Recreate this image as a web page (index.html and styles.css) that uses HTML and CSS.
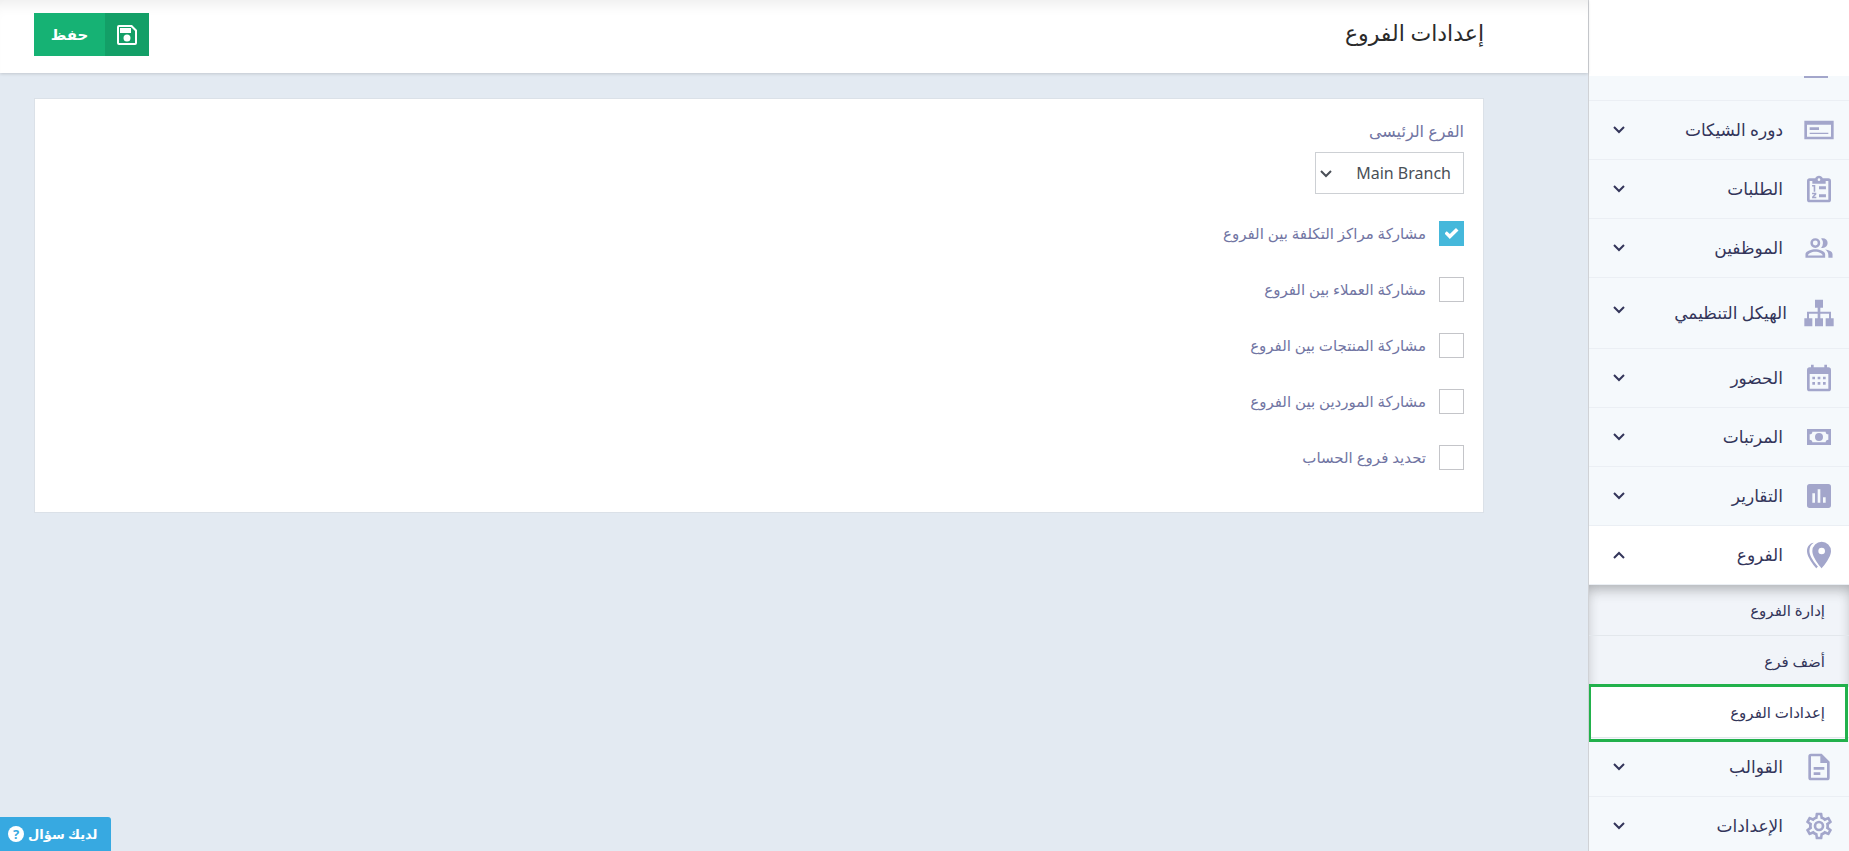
FILE: index.html
```html
<!DOCTYPE html>
<html lang="ar" dir="rtl">
<head>
    <meta charset="UTF-8">
    <meta name="viewport" content="width=device-width, initial-scale=1.0">
    <title>إعدادات الفروع</title>
    <link rel="stylesheet" href="styles.css">
</head>
<body>
    <!-- Sidebar -->
    <aside class="sidebar">
        <div class="brand"></div>
        <nav>
            <ul class="menu">
                <li class="menu-peek">
                    <svg viewBox="0 0 32 2"><path d="M1 0h24v2H1z"/></svg>
                </li>
                <li>
                    <button class="menu-item" type="button">
                        <svg class="icon" viewBox="0 0 24 24"><path fill-rule="evenodd" d="M1 5h22v14H1zM3 8v9h18V8zM5 10h7v2H5zM5 14h14v1H5z"/></svg>
                        <span>دوره الشيكات</span>
                        <svg class="chevron" viewBox="0 0 12 8"><path d="M1 1l5 5 5-5"/></svg>
                    </button>
                </li>
                <li>
                    <button class="menu-item" type="button">
                        <svg class="icon" viewBox="0 0 24 24"><path fill-rule="evenodd" d="M19 4h-4.180C14.400 2.840 13.300 2 12 2s-2.400.840-2.820 2H5a2 2 0 0 0-2 2v14a2 2 0 0 0 2 2h14a2 2 0 0 0 2-2V6a2 2 0 0 0-2-2zm-7 0a1 1 0 1 1 0 2 1 1 0 0 1 0-2zM5 6h2v2h10V6h2v14H5zM6.800 9h2.400v5H8v-3.800H6.800zM12 10h5.200v2.200H12zM12 16h5.200v2.200H12zM6.800 14.800H10v1.300l-1.700 1.800H10V19H6.800v-1.200l1.800-1.900H6.800z"/></svg>
                        <span>الطلبات</span>
                        <svg class="chevron" viewBox="0 0 12 8"><path d="M1 1l5 5 5-5"/></svg>
                    </button>
                </li>
                <li>
                    <button class="menu-item" type="button">
                        <svg class="icon" viewBox="-1 -1 26 26"><path d="M17 13.200c2 1.400 2.600 2.700 2.600 4.800v2H23v-3c0-2.200-3.200-3.500-6-3.800zM15 12a4 4 0 0 0 0-8c-.5 0-.9.100-1.300.200a5.500 5.500 0 0 1 0 7.600c.4.100.8.200 1.300.200zM9 12a4 4 0 1 0 0-8 4 4 0 0 0 0 8zm0-6a2 2 0 1 1 0 4 2 2 0 0 1 0-4zM9 13c-2.700 0-8 1.300-8 4v3h16v-3c0-2.700-5.300-4-8-4zm6 5H3c0-1.300 3-3 6-3s6 1.700 6 3z"/></svg>
                        <span>الموظفين</span>
                        <svg class="chevron" viewBox="0 0 12 8"><path d="M1 1l5 5 5-5"/></svg>
                    </button>
                </li>
                <li>
                    <button class="menu-item menu-item-tall" type="button">
                        <svg class="icon" viewBox="0 0 24 24"><path d="M9 2h6v6h-2v3h8v5h2v6h-6v-6h2.500v-3.500H13V16h2v6H9v-6h2v-3.500H4.500V16H7v6H1v-6h2v-5h8V8H9z"/></svg>
                        <span>الهيكل التنظيمي</span>
                        <svg class="chevron" viewBox="0 0 12 8"><path d="M1 1l5 5 5-5"/></svg>
                    </button>
                </li>
                <li>
                    <button class="menu-item" type="button">
                        <svg class="icon" viewBox="0 0 24 24"><path fill-rule="evenodd" d="M19 4h-1V2h-2v2H8V2H6v2H5a2 2 0 0 0-2 2v14a2 2 0 0 0 2 2h14a2 2 0 0 0 2-2V6a2 2 0 0 0-2-2zm0 16H5V9h14zM7 11h2v2H7zM11 11h2v2h-2zM15 11h2v2h-2zM7 15h2v2H7zM11 15h2v2h-2zM15 15h2v2h-2z"/></svg>
                        <span>الحضور</span>
                        <svg class="chevron" viewBox="0 0 12 8"><path d="M1 1l5 5 5-5"/></svg>
                    </button>
                </li>
                <li>
                    <button class="menu-item" type="button">
                        <svg class="icon" viewBox="0 0 24 24"><path fill-rule="evenodd" d="M3 6h18v12H3zM7 8a2 2 0 0 1-2 2v4a2 2 0 0 1 2 2h10a2 2 0 0 1 2-2v-4a2 2 0 0 1-2-2zm5 1a3 3 0 1 1 0 6 3 3 0 0 1 0-6z"/></svg>
                        <span>المرتبات</span>
                        <svg class="chevron" viewBox="0 0 12 8"><path d="M1 1l5 5 5-5"/></svg>
                    </button>
                </li>
                <li>
                    <button class="menu-item" type="button">
                        <svg class="icon" viewBox="0 0 24 24"><path fill-rule="evenodd" d="M5 3h14a2 2 0 0 1 2 2v14a2 2 0 0 1-2 2H5a2 2 0 0 1-2-2V5a2 2 0 0 1 2-2zM7 10v7h2v-7zM11 7v10h2V7zM15 13v4h2v-4z"/></svg>
                        <span>التقارير</span>
                        <svg class="chevron" viewBox="0 0 12 8"><path d="M1 1l5 5 5-5"/></svg>
                    </button>
                </li>
                <li>
                    <button class="menu-item menu-item-open" type="button">
                        <svg class="icon" viewBox="0 0 24 24"><path fill-rule="evenodd" d="M14 2a7 7 0 0 0-7 7c0 5.200 7 13 7 13s7-7.800 7-13a7 7 0 0 0-7-7zm0 4.500a2.500 2.500 0 1 1 0 5 2.500 2.500 0 0 1 0-5z"/><path d="M4.800 9c0-2.600 1.200-4.900 3.300-6.100C5 3.200 3 5.900 3 9c0 5.200 7 13 7 13l1.200-1.400C9 18.300 4.800 13 4.800 9z"/></svg>
                        <span>الفروع</span>
                        <svg class="chevron" viewBox="0 0 12 8"><path d="M1 7l5-5 5 5"/></svg>
                    </button>
                    <ul class="submenu">
                        <li><a href="#">إدارة الفروع</a></li>
                        <li><a href="#">أضف فرع</a></li>
                        <li><a href="#" class="current">إعدادات الفروع</a></li>
                    </ul>
                </li>
                <li>
                    <button class="menu-item" type="button">
                        <svg class="icon" viewBox="0 0 24 24"><path fill-rule="evenodd" d="M6 2h8l6 6v12a2 2 0 0 1-2 2H6a2 2 0 0 1-2-2V4a2 2 0 0 1 2-2zm0 2v16h12V9h-5V4zM8 12h8v2H8zM8 16h5v2H8z"/></svg>
                        <span>القوالب</span>
                        <svg class="chevron" viewBox="0 0 12 8"><path d="M1 1l5 5 5-5"/></svg>
                    </button>
                </li>
                <li>
                    <button class="menu-item" type="button">
                        <svg class="icon" viewBox="0 0 24 24"><path d="M12 8a4 4 0 1 1 0 8 4 4 0 0 1 0-8m0 2a2 2 0 1 0 0 4 2 2 0 0 0 0-4m-2 12c-.25 0-.46-.18-.5-.42l-.37-2.650c-.63-.25-1.170-.59-1.690-.99l-2.490 1.010c-.22.080-.49 0-.61-.22l-2-3.460a.49.49 0 0 1 .12-.64l2.110-1.660L4.500 12l.070-1-2.110-1.630a.49.49 0 0 1-.12-.64l2-3.460c.12-.22.390-.31.610-.22l2.490 1c.520-.39 1.060-.73 1.690-.98l.370-2.650c.040-.24.250-.42.500-.42h4c.250 0 .460.180.500.420l.370 2.650c.630.250 1.170.59 1.690.98l2.490-1c.220-.09.490 0 .610.220l2 3.460c.130.220.070.490-.12.640L19.430 11l.070 1-.07 1 2.110 1.630c.190.150.250.420.120.640l-2 3.460c-.12.220-.39.310-.61.220l-2.490-1c-.52.390-1.060.73-1.690.98l-.37 2.650c-.04.240-.25.420-.5.420zm1.250-18-.37 2.610c-1.200.25-2.260.89-3.030 1.780L5.440 7.350l-.75 1.300L6.800 10.200a6.100 6.100 0 0 0 0 3.600l-2.120 1.560.75 1.300 2.430-1.040c.77.880 1.820 1.520 3.010 1.760l.37 2.620h1.520l.37-2.610c1.190-.25 2.240-.89 3.010-1.770l2.430 1.040.75-1.300-2.120-1.550c.4-1.170.4-2.440 0-3.610l2.110-1.550-.75-1.300-2.410 1.040a5.400 5.400 0 0 0-3.030-1.770L12.750 4z"/></svg>
                        <span>الإعدادات</span>
                        <svg class="chevron" viewBox="0 0 12 8"><path d="M1 1l5 5 5-5"/></svg>
                    </button>
                </li>
            </ul>
        </nav>
    </aside>

    <!-- Page -->
    <form class="page">
        <header class="page-head">
            <h1>إعدادات الفروع</h1>
            <button class="save" type="submit">
                <span class="save-icon">
                    <svg viewBox="0 0 20 20"><path fill-rule="evenodd" d="M2 0h13l5 5v13a2 2 0 0 1-2 2H2a2 2 0 0 1-2-2V2a2 2 0 0 1 2-2zm0 2v16h16V6l-4-4zM3 3h11v5H3zM10 9.500a3.500 3.500 0 1 1 0 7 3.500 3.500 0 0 1 0-7z"/></svg>
                </span>
                <span class="save-text">حفظ</span>
            </button>
        </header>

        <main class="card">
            <label class="field-label" for="main-branch">الفرع الرئيسى</label>
            <div class="select-box">
                <select id="main-branch">
                    <option>Main Branch</option>
                </select>
                <svg viewBox="0 0 12 8"><path d="M1 1l5 5 5-5"/></svg>
            </div>

            <div class="checks">
                <label class="check"><input type="checkbox" checked><span>مشاركة مراكز التكلفة بين الفروع</span></label>
                <label class="check"><input type="checkbox"><span>مشاركة العملاء بين الفروع</span></label>
                <label class="check"><input type="checkbox"><span>مشاركة المنتجات بين الفروع</span></label>
                <label class="check"><input type="checkbox"><span>مشاركة الموردين بين الفروع</span></label>
                <label class="check"><input type="checkbox"><span>تحديد فروع الحساب</span></label>
            </div>
        </main>
    </form>

    <button class="help" type="button">
        <span>لديك سؤال</span>
        <span class="help-mark">?</span>
    </button>
</body>
</html>
```
FILE: styles.css
```css
* {
    box-sizing: border-box;
}
body {
    display: flex;
    height: 100vh;
    margin: 0;
    overflow: hidden;
    background-color: #e3eaf2;
    font-family: "Noto Sans", "DejaVu Sans", sans-serif;
    color: #33355a;
}
button, select {
    font-family: inherit;
    color: inherit;
    cursor: pointer;
}
ul {
    list-style: none;
    margin: 0;
    padding: 0;
}

/* Sidebar */
.sidebar {
    flex: 0 0 261px;
    display: flex;
    flex-direction: column;
    background-color: #f5f9fc;
    border-left: 1px solid #d0d2d6;
    overflow: hidden;
}
.brand {
    flex: 0 0 76px;
    background-color: #fff;
}
.menu-peek {
    height: 25px;
    padding-right: 14px;
    border-bottom: 1px solid #ebeff4;
}
.menu-peek svg {
    display: block;
    width: 32px;
    height: 2px;
    fill: #a3a6cb;
}
.menu-item {
    display: flex;
    align-items: center;
    width: 100%;
    height: 59px;
    padding: 0 14px 0 24px;
    border: none;
    border-bottom: 1px solid #ebeff4;
    background: none;
    font-size: 17px;
    text-align: right;
}
.menu-item span {
    flex: 1;
    margin-right: 20px;
    padding-bottom: 2px;
    white-space: nowrap;
}
.menu-item-tall {
    height: 71px;
}
.menu-item-tall span {
    margin-right: 16px;
}
.menu-item-tall .chevron {
    align-self: flex-start;
    margin-top: 28px;
}
.menu-item-open {
    background-color: #fff;
}
.icon {
    width: 32px;
    height: 32px;
    fill: #a3a6cb;
}
.chevron {
    width: 12px;
    height: 8px;
    fill: none;
    stroke: #33355a;
    stroke-width: 2;
}
.submenu {
    background-color: #f1f4f9;
    box-shadow: inset 0 8px 14px -4px rgba(0, 0, 0, 0.28), inset 0 0 14px rgba(0, 0, 0, 0.04);
}
.submenu a {
    display: flex;
    align-items: center;
    height: 51px;
    padding: 0 24px;
    border-bottom: 1px solid #e3e7ec;
    font-size: 15px;
    color: inherit;
    text-decoration: none;
}
.submenu .current {
    position: relative;
    background-color: #fff;
}
.submenu .current::after {
    content: "";
    position: absolute;
    inset: -3px 1px -5px -1px;
    border: 3px solid #22b14c;
}

/* Page */
.page {
    flex: 1;
    min-width: 0;
}
.page-head {
    display: flex;
    justify-content: space-between;
    align-items: flex-start;
    height: 73px;
    padding: 13px 104px 0 34px;
    background-color: #fff;
    box-shadow: inset 0 14px 14px -10px rgba(0, 0, 0, 0.08), 0 1px 3px rgba(0, 0, 0, 0.15);
}
h1 {
    margin: 0;
    font-size: 22px;
    line-height: 38px;
    font-weight: normal;
    color: #2b2b2b;
}
.save {
    display: flex;
    height: 43px;
    padding: 0;
    border: none;
    background-color: #16b274;
    color: #fff;
    font-size: 15px;
    font-weight: bold;
}
.save-icon {
    display: flex;
    align-items: center;
    justify-content: center;
    width: 44px;
    height: 100%;
    background-color: #139f67;
}
.save-icon svg {
    width: 20px;
    height: 20px;
    fill: #fff;
}
.save-text {
    width: 71px;
    line-height: 42px;
}

.card {
    margin: 25px 104px 0 34px;
    padding: 20px 19px 42px;
    border: 1px solid #dbe1e8;
    background-color: #fff;
    color: #7175a3;
}
.field-label {
    display: block;
    margin-bottom: 9px;
    font-size: 16px;
    line-height: 24px;
}
.select-box {
    position: relative;
    width: 149px;
}
.select-box select {
    display: block;
    width: 100%;
    height: 42px;
    padding: 0 12px;
    border: 1px solid #cdd0d4;
    border-radius: 0;
    background-color: #fff;
    color: #4a4f57;
    font-size: 16px;
    appearance: none;
}
.select-box svg {
    position: absolute;
    left: 5px;
    top: 18px;
    width: 12px;
    height: 8px;
    fill: none;
    stroke: #4a4f57;
    stroke-width: 2;
    pointer-events: none;
}
.checks {
    display: flex;
    flex-direction: column;
    align-items: flex-start;
    gap: 31px;
    margin-top: 27px;
}
.check {
    display: flex;
    align-items: center;
    gap: 13px;
    height: 25px;
    font-size: 15px;
    cursor: pointer;
}
.check span {
    padding-bottom: 2px;
}
.check input {
    display: grid;
    place-items: center;
    width: 25px;
    height: 25px;
    margin: 0;
    border: 1px solid #c4c5c9;
    background-color: #fff;
    appearance: none;
}
.check input:checked {
    border-color: #45b8db;
    background-color: #45b8db;
}
.check input:checked::after {
    content: "";
    width: 14px;
    height: 11px;
    background-color: #fff;
    clip-path: polygon(0 50%, 16% 30%, 38% 55%, 82% 0, 100% 22%, 38% 100%);
}

/* Help tab */
.help {
    position: fixed;
    left: 0;
    bottom: 0;
    display: flex;
    align-items: center;
    gap: 4px;
    height: 34px;
    padding: 0 14px 0 8px;
    border: none;
    border-radius: 0 3px 0 0;
    background-color: #37a9e1;
    color: #fff;
    font-size: 13px;
    font-weight: bold;
}
.help-mark {
    width: 16px;
    height: 16px;
    border-radius: 50%;
    background-color: #fff;
    color: #37a9e1;
    line-height: 16px;
    text-align: center;
}
```
